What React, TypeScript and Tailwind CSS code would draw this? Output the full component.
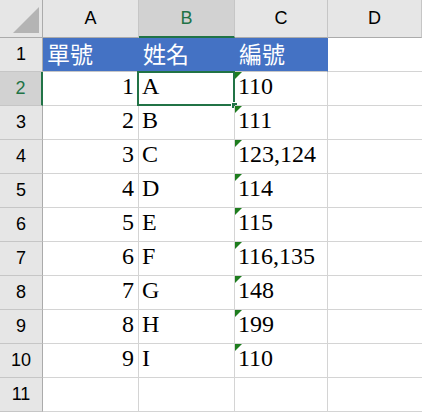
const rows: [string, string, string][] = [
  ["1", "A", "110"],
  ["2", "B", "111"],
  ["3", "C", "123,124"],
  ["4", "D", "114"],
  ["5", "E", "115"],
  ["6", "F", "116,135"],
  ["7", "G", "148"],
  ["8", "H", "199"],
  ["9", "I", "110"],
];

const sans = { fontFamily: '"Liberation Sans", Arial, sans-serif' };
const serif = { fontFamily: '"Liberation Serif", "Noto Sans CJK TC", serif' };

function Flag() {
  return (
    <span className="absolute left-0 top-0 w-0 h-0 border-t-[7px] border-r-[7px] border-t-[#1e7d1e] border-r-transparent" />
  );
}

function RowHead({ n, active = false }: { n: number; active?: boolean }) {
  return (
    <div
      style={sans}
      className={`h-[34px] flex items-center justify-center text-[18px] border-b border-b-[#c6c6c6] ${
        active
          ? "bg-[#d2d2d2] text-[#217346] border-r-2 border-r-[#217346]"
          : "bg-[#e6e6e6] text-black border-r border-r-[#ababab]"
      }`}
    >
      {n}
    </div>
  );
}

export default function App() {
  return (
    <div className="w-[422px] h-[414px] overflow-hidden bg-white">
      <div className="grid grid-cols-[43px_96px_96px_93px_1fr]">
        {/* column headers */}
        <div className="relative h-[38px] bg-[#e6e6e6] border-r border-b border-[#ababab]">
          <svg className="absolute left-0 top-0" width="42" height="37">
            <polygon points="13,33 39,7 39,33" fill="#b4b4b4" />
          </svg>
        </div>
        {["A", "B", "C", "D"].map((c) => (
          <div
            key={c}
            style={sans}
            className={`h-[38px] flex items-center justify-center text-[18px] border-r border-r-[#c6c6c6] ${
              c === "B"
                ? "bg-[#d2d2d2] text-[#217346] border-b-2 border-b-[#217346]"
                : "bg-[#e6e6e6] text-black border-b border-b-[#ababab]"
            }`}
          >
            {c}
          </div>
        ))}

        {/* row 1: title row */}
        <RowHead n={1} />
        {["單號", "姓名", "編號"].map((t) => (
          <div
            key={t}
            style={serif}
            className="h-[34px] flex items-end pb-[4px] pl-[4px] text-[23px] leading-none text-white bg-[#4472c4] border-r border-r-[#4472c4] border-b border-b-[#c6c6c6]"
          >
            {t}
          </div>
        ))}
        <div className="h-[34px] border-b border-[#d4d4d4]" />

        {rows.map(([no, name, code], i) => (
          <div key={no} className="contents">
            <RowHead n={i + 2} active={i === 0} />
            <div
              style={serif}
              className="h-[34px] flex items-end justify-end pb-[1px] pr-[4px] text-[24px] text-black border-r border-b border-[#d4d4d4]"
            >
              {no}
            </div>
            <div
              style={serif}
              className="relative h-[34px] flex items-end pb-[1px] pl-[3px] text-[24px] text-black border-r border-b border-[#d4d4d4]"
            >
              {name}
              {i === 0 && (
                <>
                  <span className="absolute -left-[2px] -top-[1px] -right-[1px] -bottom-[1px] border-2 border-[#217346]" />
                  <span className="absolute -right-[4px] -bottom-[4px] w-[7px] h-[7px] bg-[#217346] border border-white" />
                </>
              )}
            </div>
            <div
              style={serif}
              className="relative h-[34px] flex items-end pb-[1px] pl-[3px] text-[24px] text-black border-r border-b border-[#d4d4d4]"
            >
              <Flag />
              {code}
            </div>
            <div className="h-[34px] border-b border-[#d4d4d4]" />
          </div>
        ))}

        {/* row 11 */}
        <RowHead n={11} />
        <div className="h-[34px] border-r border-b border-[#d4d4d4]" />
        <div className="h-[34px] border-r border-b border-[#d4d4d4]" />
        <div className="h-[34px] border-r border-b border-[#d4d4d4]" />
        <div className="h-[34px] border-b border-[#d4d4d4]" />
      </div>
    </div>
  );
}
